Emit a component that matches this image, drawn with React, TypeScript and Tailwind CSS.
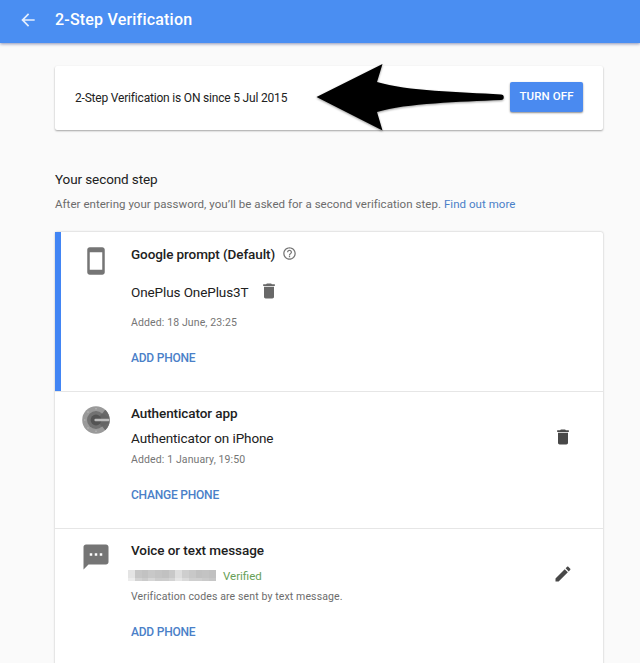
import type { ReactNode } from "react";

function MaterialIcon({ path, className }: { path: string; className: string }) {
  return (
    <svg viewBox="0 0 24 24" fill="currentColor" className={className}>
      <path d={path} />
    </svg>
  );
}

const icons = {
  back: "M20 11H7.83l5.59-5.59L12 4l-8 8 8 8 1.41-1.41L7.83 13H20v-2z",
  phone:
    "M17 1.01L7 1c-1.1 0-1.99.9-1.99 2v18c0 1.1.89 2 1.99 2h10c1.1 0 2-.9 2-2V3c0-1.1-.9-1.99-2-1.99zM17 19H7V5h10v14z",
  help: "M11 18h2v-2h-2v2zm1-16C6.48 2 2 6.48 2 12s4.48 10 10 10 10-4.48 10-10S17.52 2 12 2zm0 18c-4.41 0-8-3.59-8-8s3.59-8 8-8 8 3.59 8 8-3.59 8-8 8zm0-14c-2.21 0-4 1.79-4 4h2c0-1.1.9-2 2-2s2 .9 2 2c0 2-3 1.75-3 5h2c0-2.25 3-2.5 3-5 0-2.21-1.79-4-4-4z",
  trash: "M6 19c0 1.1.9 2 2 2h8c1.1 0 2-.9 2-2V7H6v12zM19 4h-3.5l-1-1h-5l-1 1H5v2h14V4z",
  sms: "M20 2H4c-1.1 0-1.99.9-1.99 2L2 22l4-4h14c1.1 0 2-.9 2-2V4c0-1.1-.9-2-2-2zM9 11H7V9h2v2zm4 0h-2V9h2v2zm4 0h-2V9h2v2z",
  edit: "M3 17.25V21h3.75L17.81 9.94l-3.75-3.75L3 17.25zM20.71 7.04c.39-.39.39-1.02 0-1.41l-2.34-2.34c-.39-.39-1.02-.39-1.41 0l-1.83 1.83 3.75 3.75 1.83-1.83z",
};

function AuthenticatorIcon() {
  return (
    <svg viewBox="0 0 28 28" className="size-7">
      <circle cx="14" cy="14" r="13.8" fill="#9a9a9a" />
      <path d="M18 10.5 23.2 3.8A13.8 13.8 0 0 1 23.2 24.2L18 17.5Z" fill="#6a6a6a" />
      <circle cx="14" cy="14" r="9" fill="#727272" />
      <path d="M14 14 20 7.4 26.5 11v6L20 20.6Z" fill="#656565" />
      <circle cx="14" cy="14" r="5.4" fill="#545454" />
      <path d="M13.6 12.8h12.7a1.2 1.2 0 0 1 0 2.4H13.6a1.2 1.2 0 0 1 0-2.4Z" fill="#bdbdbd" />
      <g fill="#b8b8b8">
        <circle cx="2.8" cy="14" r=".8" />
        <circle cx="6" cy="6" r=".8" />
        <circle cx="14" cy="2.8" r=".8" />
        <circle cx="6" cy="22" r=".8" />
        <circle cx="14" cy="25.2" r=".8" />
      </g>
    </svg>
  );
}

function PointerArrow() {
  return (
    <svg
      viewBox="0 0 190 70"
      className="absolute top-[-4px] left-[260px] h-[70px] w-[190px] drop-shadow-[0_1px_1px_rgba(0,0,0,0.4)]"
    >
      <path d="M1.5 35 67.5 2 62 20C92 29 145 30 186 32.5A2.7 2.7 0 0 1 186 38C145 40 92 41 62 50L67.5 68.5Z" />
    </svg>
  );
}

// Phone number pixelated for privacy
const mosaic = [
  "bg-[#e4e4e4]", "bg-[#c6c6c6]", "bg-[#c2c2c2]", "bg-[#c8c8c8]", "bg-[#c4c4c4]", "bg-[#c1c1c1]", "bg-[#c8c8c8]",
  "bg-[#dedede]", "bg-[#cecece]", "bg-[#c8c8c8]", "bg-[#c1c1c1]", "bg-[#c3c3c3]", "bg-[#c0c0c0]",
  "bg-[#ececec]", "bg-[#d2d2d2]", "bg-[#cbcbcb]", "bg-[#d6d6d6]", "bg-[#cccccc]", "bg-[#cdcdcd]", "bg-[#d3d3d3]",
  "bg-[#e5e5e5]", "bg-[#dadada]", "bg-[#cfcfcf]", "bg-[#cfcfcf]", "bg-[#cacaca]", "bg-[#c6c6c6]",
];

type StepProps = {
  icon: ReactNode;
  action: string;
  children: ReactNode;
  aside?: ReactNode;
  className: string;
};

function Step({ icon, action, children, aside, className }: StepProps) {
  return (
    <section className={`flex items-start ${className}`}>
      <div className="flex w-[30px] shrink-0 justify-center text-[#757575]">{icon}</div>
      <div className="ml-5 flex-1">
        {children}
        <button className="mt-[17px] block text-[12px] leading-5 font-medium tracking-[-0.22px] text-[#4a80c8]">
          {action}
        </button>
      </div>
      {aside}
    </section>
  );
}

export default function App() {
  return (
    <div className="h-[663px] overflow-hidden bg-[#fafafa] font-['Roboto',sans-serif] text-[#212121]">
      <header className="flex h-[43px] items-center bg-[#4a8ef2] pb-[3px] pl-[18px] text-white shadow-[0_1px_3px_rgba(50,60,120,0.55)]">
        <MaterialIcon path={icons.back} className="size-5 opacity-85" />
        <h1 className="ml-[17px] text-[16px] leading-5 font-medium tracking-[0.2px]">2-Step Verification</h1>
      </header>

      <main className="ml-[55px] w-[548px]">
        <div className="relative mt-[23px] flex h-16 items-center justify-between rounded-[2px] bg-white pr-5 pl-5 shadow-[0_1px_2px_rgba(0,0,0,0.35)]">
          <p className="text-[12px] tracking-[-0.19px]">2-Step Verification is ON since 5 Jul 2015</p>
          <PointerArrow />
          <button className="mt-[-3px] h-[30px] w-[73px] rounded-[2px] bg-[#4a8af0] text-[11.5px] font-medium tracking-[0.1px] text-white shadow-[0_1px_2px_rgba(0,0,0,0.45)]">
            TURN OFF
          </button>
        </div>

        <h2 className="mt-[39px] text-[13.5px] leading-5 tracking-[-0.1px]">Your second step</h2>
        <p className="mt-[7px] text-[11.5px] leading-4 tracking-[0.045px] text-[#6c6c6c]">
          After entering your password, you’ll be asked for a second verification step.{" "}
          <a className="text-[#4a80c8]">Find out more</a>
        </p>

        <div className="mt-5 h-[460px] rounded-t-[2px] bg-white shadow-[0_0_2px_rgba(0,0,0,0.3)]">
          <Step
            className="h-[159px] border-l-[6px] border-[#4285f4] pt-3 pl-5"
            icon={<MaterialIcon path={icons.phone} className="mt-[2px] size-[30px] shrink-0" />}
            action="ADD PHONE"
          >
            <h3 className="flex items-center text-[13.5px] leading-5 font-medium tracking-[-0.09px]">
              Google prompt (Default)
              <MaterialIcon path={icons.help} className="mt-[-2px] ml-[7px] size-[15px] text-[#757575]" />
            </h3>
            <div className="mt-[18px] flex items-center text-[13.5px] leading-5 tracking-[-0.1px]">
              OnePlus OnePlus3T
              <MaterialIcon path={icons.trash} className="mt-[-3px] ml-[10px] size-5 text-[#686868]" />
            </div>
            <p className="mt-[13px] text-[10.5px] leading-4 tracking-[0.12px] text-[#757575]">Added: 18 June, 23:25</p>
          </Step>

          <Step
            className="h-[137px] border-t border-[#e6e6e6] pt-[11px] pl-[26px]"
            icon={<div className="mt-[3px]"><AuthenticatorIcon /></div>}
            action="CHANGE PHONE"
            aside={<MaterialIcon path={icons.trash} className="mt-6 mr-[30px] size-5 text-[#484848]" />}
          >
            <h3 className="text-[13.5px] leading-5 font-medium tracking-[-0.09px]">Authenticator app</h3>
            <p className="mt-[5px] text-[13.5px] leading-5 tracking-[-0.1px]">Authenticator on iPhone</p>
            <p className="mt-1 text-[10.5px] leading-4 tracking-[0.12px] text-[#757575]">Added: 1 January, 19:50</p>
          </Step>

          <Step
            className="border-t border-[#e6e6e6] pt-[11px] pl-[26px]"
            icon={<MaterialIcon path={icons.sms} className="mt-[2px] size-[30px] shrink-0" />}
            action="ADD PHONE"
            aside={<MaterialIcon path={icons.edit} className="mt-6 mr-[30px] size-5 text-[#484848]" />}
          >
            <h3 className="text-[13.5px] leading-5 font-medium tracking-[-0.07px]">Voice or text message</h3>
            <div className="mt-[6px] flex h-5 items-center">
              <div className="mt-[-2px] -ml-[3px] grid w-[88px] grid-cols-13 grid-rows-[8px_3px]">
                {mosaic.map((shade, i) => (
                  <span key={i} className={shade} />
                ))}
              </div>
              <span className="ml-[7px] text-[11.5px] leading-5 text-[#689f58]">Verified</span>
            </div>
            <p className="mt-[3px] text-[10.5px] leading-4 tracking-[0.12px] text-[#6c6c6c]">
              Verification codes are sent by text message.
            </p>
          </Step>
        </div>
      </main>
    </div>
  );
}
